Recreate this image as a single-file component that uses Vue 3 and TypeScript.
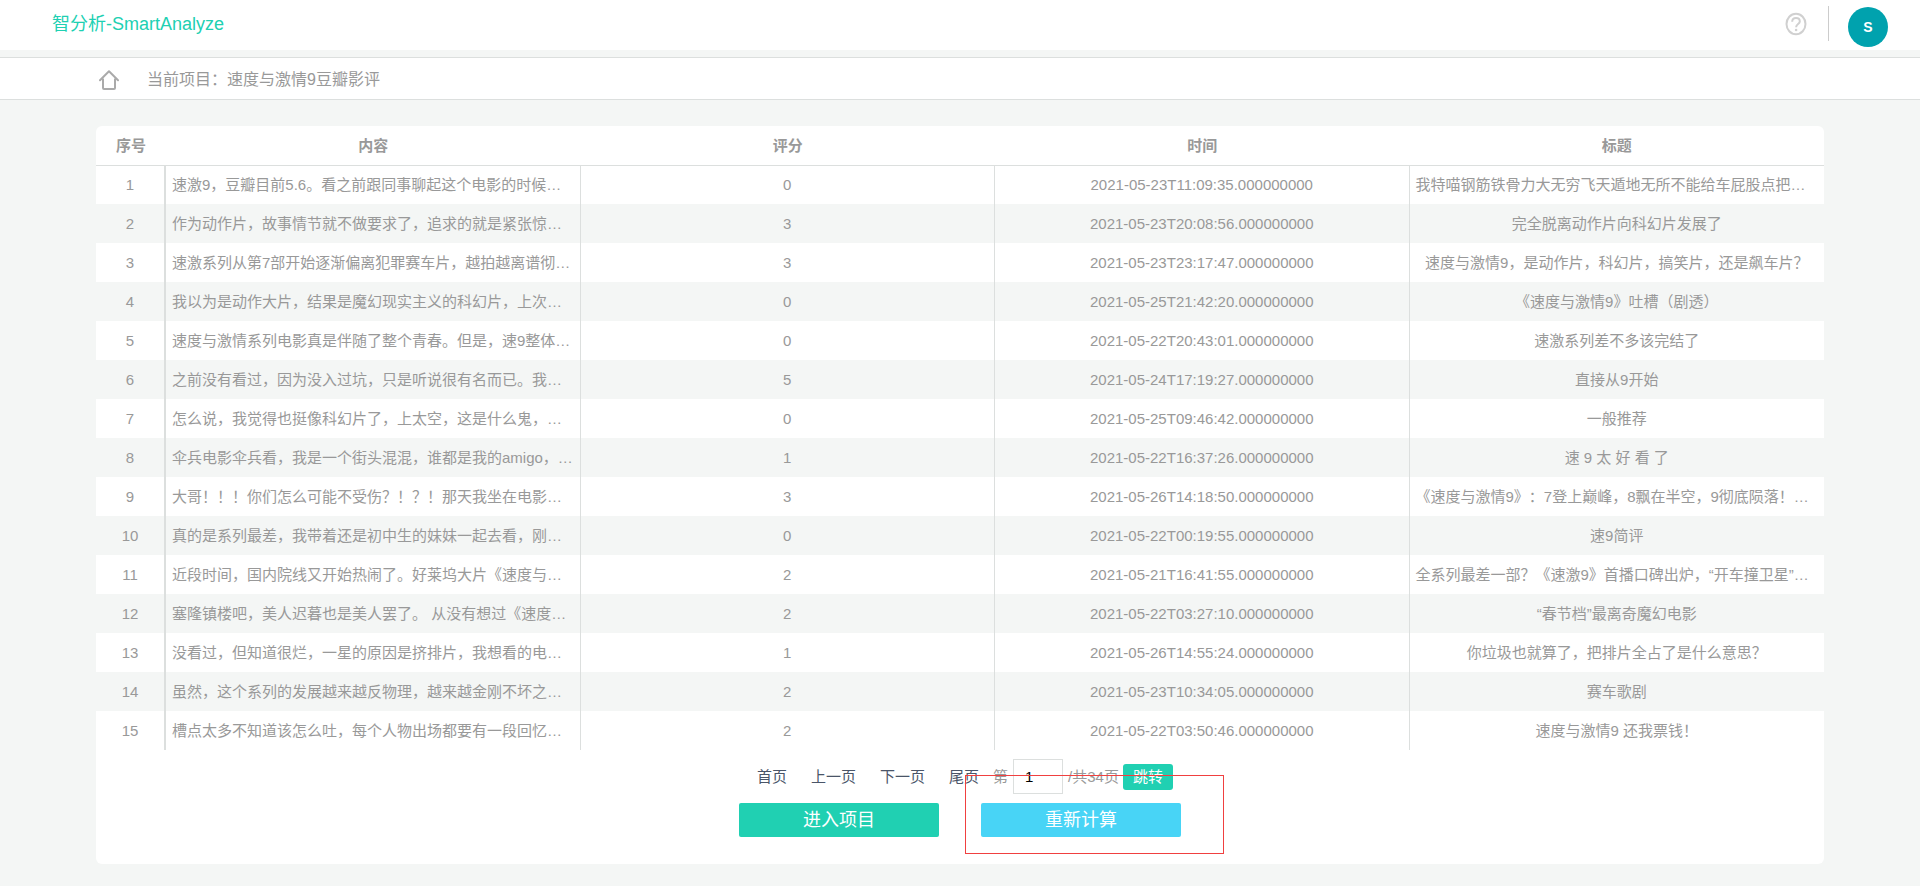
<script setup lang="ts">
import { ref } from 'vue'

interface Review {
  content: string
  score: number
  time: string
  title: string
}

const page = ref('1')
const columns: string[] = ['内容', '评分', '时间', '标题']
const pageLinks: string[] = ['首页', '上一页', '下一页', '尾页']

// Shortened texts fill the cell from its left edge; the others are centred.
const isLong = (text: string): boolean => text.endsWith('…')

const reviews: Review[] = [
  { content: '速激9，豆瓣目前5.6。看之前跟同事聊起这个电影的时候…', score: 0, time: '2021-05-23T11:09:35', title: '我特喵钢筋铁骨力大无穷飞天遁地无所不能给车屁股点把…' },
  { content: '作为动作片，故事情节就不做要求了，追求的就是紧张惊…', score: 3, time: '2021-05-23T20:08:56', title: '完全脱离动作片向科幻片发展了' },
  { content: '速激系列从第7部开始逐渐偏离犯罪赛车片，越拍越离谱彻…', score: 3, time: '2021-05-23T23:17:47', title: '速度与激情9，是动作片，科幻片，搞笑片，还是飙车片？' },
  { content: '我以为是动作大片，结果是魔幻现实主义的科幻片，上次…', score: 0, time: '2021-05-25T21:42:20', title: '《速度与激情9》吐槽（剧透）' },
  { content: '速度与激情系列电影真是伴随了整个青春。但是，速9整体…', score: 0, time: '2021-05-22T20:43:01', title: '速激系列差不多该完结了' },
  { content: '之前没有看过，因为没入过坑，只是听说很有名而已。我…', score: 5, time: '2021-05-24T17:19:27', title: '直接从9开始' },
  { content: '怎么说，我觉得也挺像科幻片了，上太空，这是什么鬼，…', score: 0, time: '2021-05-25T09:46:42', title: '一般推荐' },
  { content: '伞兵电影伞兵看，我是一个街头混混，谁都是我的amigo，…', score: 1, time: '2021-05-22T16:37:26', title: '速 9 太 好 看 了' },
  { content: '大哥！！！你们怎么可能不受伤？！？！那天我坐在电影…', score: 3, time: '2021-05-26T14:18:50', title: '《速度与激情9》：7登上巅峰，8飘在半空，9彻底陨落！…' },
  { content: '真的是系列最差，我带着还是初中生的妹妹一起去看，刚…', score: 0, time: '2021-05-22T00:19:55', title: '速9简评' },
  { content: '近段时间，国内院线又开始热闹了。好莱坞大片《速度与…', score: 2, time: '2021-05-21T16:41:55', title: '全系列最差一部？《速激9》首播口碑出炉，“开车撞卫星”…' },
  { content: '塞隆镇楼吧，美人迟暮也是美人罢了。 从没有想过《速度…', score: 2, time: '2021-05-22T03:27:10', title: '“春节档”最离奇魔幻电影' },
  { content: '没看过，但知道很烂，一星的原因是挤排片，我想看的电…', score: 1, time: '2021-05-26T14:55:24', title: '你垃圾也就算了，把排片全占了是什么意思？' },
  { content: '虽然，这个系列的发展越来越反物理，越来越金刚不坏之…', score: 2, time: '2021-05-23T10:34:05', title: '赛车歌剧' },
  { content: '槽点太多不知道该怎么吐，每个人物出场都要有一段回忆…', score: 2, time: '2021-05-22T03:50:46', title: '速度与激情9 还我票钱！' },
]
</script>

<template>
  <div class="page">
    <header class="topbar">
      <a class="brand" href="#">智分析-SmartAnalyze</a>
      <div class="tools">
        <button class="help" type="button" aria-label="帮助">
          <svg width="22" height="24" viewBox="0 0 22 24" fill="none" stroke="#d0d0d0" stroke-width="2">
            <ellipse cx="11" cy="12" rx="9.5" ry="10.2" />
            <path d="M7.2 9.8C7.2 7.4 8.8 6.1 11 6.1s3.8 1.3 3.8 3.3c0 2.6-3.7 2.7-3.7 5.8" />
            <circle cx="11.1" cy="18" r="1.3" fill="#d0d0d0" stroke="none" />
          </svg>
        </button>
        <span class="divider"></span>
        <button class="avatar" type="button">S</button>
      </div>
    </header>

    <nav class="crumb">
      <a class="home" href="#" aria-label="首页">
        <svg width="20" height="20" viewBox="0 0 20 20" fill="none" stroke="#aaa" stroke-width="2" stroke-linejoin="round">
          <path d="M1 10.2L10 1.2l9 9" stroke-linecap="round" />
          <path d="M4 8.5V18q0 1 1 1h10q1 0 1-1V8.5" />
        </svg>
      </a>
      <span>当前项目：速度与激情9豆瓣影评</span>
    </nav>

    <main class="card">
      <table class="grid">
        <thead>
          <tr>
            <th class="index" scope="col">序号</th>
            <th v-for="c in columns" :key="c" scope="col">{{ c }}</th>
          </tr>
        </thead>
        <tbody>
          <tr v-for="(r, i) in reviews" :key="i">
            <td class="index">{{ i + 1 }}</td>
            <td :class="{ long: isLong(r.content) }">{{ r.content }}</td>
            <td>{{ r.score }}</td>
            <td>{{ r.time }}.000000000</td>
            <td :class="{ long: isLong(r.title) }">{{ r.title }}</td>
          </tr>
        </tbody>
      </table>

      <div class="footer">
        <form class="pager" @submit.prevent>
          <a v-for="l in pageLinks" :key="l" href="#">{{ l }}</a>
          <label for="page-no">第</label>
          <input id="page-no" v-model="page" type="text" />
          <span>/共34页</span>
          <button class="jump" type="submit">跳转</button>
        </form>
        <div class="actions">
          <button class="enter" type="button">进入项目</button>
          <button class="recalc" type="button">重新计算</button>
        </div>
        <div class="highlight"></div>
      </div>
    </main>
  </div>
</template>

<style>
body {
  margin: 0;
  background: #fff;
}
</style>

<style scoped>
.page {
  box-sizing: border-box;
  padding-bottom: 22px;
  background: #f4f6f5;
  color: #999;
  font: 15px/22px "Liberation Sans", "Noto Sans CJK SC", sans-serif;
  text-spacing-trim: space-all;
}
a {
  color: inherit;
  text-decoration: none;
}
button,
input {
  margin: 0;
  padding: 0;
  border: 0;
  font: inherit;
}
button {
  cursor: pointer;
}
.topbar {
  display: flex;
  justify-content: space-between;
  height: 50px;
  padding: 0 32px 0 52px;
  background: #fff;
}
.brand {
  color: #20d0b2;
  font-size: 18px;
  line-height: 48px;
}
.tools {
  display: flex;
  align-items: flex-start;
}
.help {
  display: flex;
  margin-top: 12px;
  background: none;
}
.divider {
  width: 1px;
  height: 35px;
  margin: 6px 19px 0 21px;
  background: #ccc;
}
.avatar {
  width: 40px;
  height: 40px;
  margin-top: 7px;
  border-radius: 50%;
  background: #00a2ae;
  color: #fff;
  font-size: 14px;
  font-weight: bold;
}
.crumb {
  display: flex;
  align-items: center;
  height: 39px;
  margin-top: 7px;
  padding: 2px 5% 0;
  border: solid #dcdfde;
  border-width: 1px 0;
  background: #fff;
  font-size: 16px;
}
.home {
  display: flex;
  margin: 0 28px 0 3px;
}
.card {
  margin: 26px 5% 0;
  border-radius: 6px;
  background: #fff;
}
.grid {
  width: 100%;
  border-collapse: separate;
  border-spacing: 0;
  table-layout: fixed;
}
.grid th,
.grid td {
  box-sizing: border-box;
  height: 39px;
  padding: 0 5px;
  overflow: hidden;
  text-align: center;
  text-overflow: ellipsis;
  white-space: nowrap;
}
.grid td {
  border-right: 1px solid #dcdfde;
}
.grid tbody tr:first-child td {
  border-top: 1px solid #dcdfde;
}
.grid td.long {
  padding-left: 6px;
  text-align: left;
}
.grid .index {
  width: 70px;
}
.grid td.index {
  border-right-width: 2px;
}
.grid td:last-child {
  border-right: 0;
}
.grid tbody tr:nth-child(even) {
  background: #f4f6f5;
}
.footer {
  position: relative;
  padding: 9px 0 27px;
}
.pager {
  display: flex;
  align-items: center;
  justify-content: center;
  padding-right: 2px;
}
.pager a {
  padding: 0 12px;
  color: #4a5568;
}
.pager label {
  margin-left: 2px;
}
.pager input {
  box-sizing: border-box;
  width: 50px;
  height: 35px;
  margin: 0 5px;
  padding: 0 11px;
  border: 1px solid #dcdfde;
  background: #fff;
  color: #000;
}
.jump {
  width: 50px;
  height: 26px;
  margin-left: 4px;
  border-radius: 3px;
  background: #20d0b2;
  color: #fff;
}
.actions {
  display: flex;
  justify-content: center;
  gap: 42px;
  margin-top: 9px;
}
.actions button {
  width: 200px;
  height: 34px;
  border-radius: 2px;
  color: #fff;
  font-size: 18px;
}
.actions .enter {
  background: #20d0b2;
}
.actions .recalc {
  background: #48d4f6;
}
.highlight {
  position: absolute;
  top: 25px;
  left: calc(50% + 5px);
  box-sizing: border-box;
  width: 259px;
  height: 79px;
  border: 1px solid #f04040;
  pointer-events: none;
}
</style>
